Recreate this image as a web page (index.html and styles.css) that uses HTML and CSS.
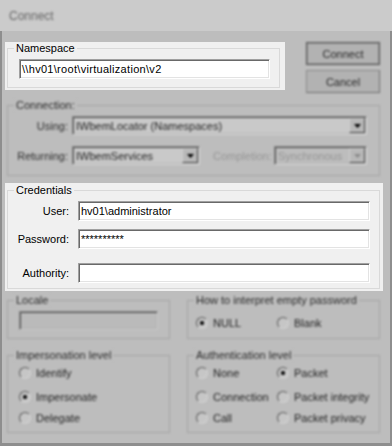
FILE: index.html
```html
<!DOCTYPE html>
<html>
<head>
<meta charset="utf-8">
<link rel="stylesheet" href="styles.css">
</head>
<body>
<div class="titlebar"><span class="title dim">Connect</span></div>
<div class="frame">
  <div class="row-top">
    <div class="focus ns-box">
      <div class="group ns-group">
        <div class="legend">Namespace</div>
        <div class="field ns-field">\\hv01\root\virtualization\v2</div>
      </div>
    </div>
    <div class="buttons dim">
      <button class="btn default">Connect</button>
      <button class="btn">Cancel</button>
    </div>
  </div>

  <div class="group dimgroup dim conn">
    <div class="legend">Connection:</div>
    <div class="conn-row using-row">
      <span class="lbl conn-lbl">Using:</span>
      <div class="combo using-combo"><span>IWbemLocator (Namespaces)</span><span class="drop"><svg width="7" height="4" viewBox="0 0 7 4"><polygon points="0,0 7,0 3.5,4" fill="#000"/></svg></span></div>
    </div>
    <div class="conn-row ret-row">
      <span class="lbl conn-lbl">Returning:</span>
      <div class="combo ret-combo"><span>IWbemServices</span><span class="drop"><svg width="7" height="4" viewBox="0 0 7 4"><polygon points="0,0 7,0 3.5,4" fill="#000"/></svg></span></div>
      <span class="lbl disabled compl-lbl">Completion:</span>
      <div class="combo disabled compl-combo"><span>Synchronous</span><span class="drop"><svg width="7" height="4" viewBox="0 0 7 4"><polygon points="0,0 7,0 3.5,4" fill="#8a8a8a"/></svg></span></div>
    </div>
  </div>

  <div class="focus cred-box">
    <div class="group cred-group">
      <div class="legend">Credentials</div>
      <div class="cred-row user-row">
        <span class="lbl cred-lbl">User:</span>
        <div class="field cred-field">hv01\administrator</div>
      </div>
      <div class="cred-row pass-row">
        <span class="lbl cred-lbl">Password:</span>
        <div class="field cred-field">**********</div>
      </div>
      <div class="cred-row auth-row">
        <span class="lbl cred-lbl">Authority:</span>
        <div class="field cred-field"></div>
      </div>
    </div>
  </div>

  <div class="pair row4">
    <div class="group dimgroup dim locale">
      <div class="legend">Locale</div>
      <div class="field dimfield locale-field"></div>
    </div>
    <div class="group dimgroup dim empty-pw">
      <div class="legend">How to interpret empty password</div>
      <div class="radio-grid pw-grid">
        <label class="opt"><span class="radio on"></span>NULL</label>
        <label class="opt"><span class="radio"></span>Blank</label>
      </div>
    </div>
  </div>

  <div class="pair row5">
    <div class="group dimgroup dim imp">
      <div class="legend">Impersonation level</div>
      <div class="radio-list imp-list">
        <label class="opt r1"><span class="radio"></span>Identify</label>
        <label class="opt r2"><span class="radio on"></span>Impersonate</label>
        <label class="opt r3"><span class="radio"></span>Delegate</label>
      </div>
    </div>
    <div class="group dimgroup dim authlvl">
      <div class="legend">Authentication level</div>
      <div class="radio-grid auth-grid">
        <label class="opt r1"><span class="radio"></span>None</label>
        <label class="opt r1"><span class="radio on"></span>Packet</label>
        <label class="opt r2"><span class="radio"></span>Connection</label>
        <label class="opt r2"><span class="radio"></span>Packet integrity</label>
        <label class="opt r3"><span class="radio"></span>Call</label>
        <label class="opt r3"><span class="radio"></span>Packet privacy</label>
      </div>
    </div>
  </div>
</div>
</body>
</html>
```

FILE: styles.css
```css
* { box-sizing: border-box; }
html, body { margin: 0; padding: 0; }
body {
  width: 392px;
  height: 446px;
  overflow: hidden;
  background: #bdbdbd;
  font-family: "Liberation Sans", Arial, sans-serif;
  font-size: 11px;
  color: #000;
}
.dim { filter: blur(0.8px); }

.titlebar {
  height: 31px;
  background: #cbcbcb;
  display: flex;
  align-items: center;
  padding-left: 9px;
}
.title { font-size: 12px; color: #666; }

.frame {
  height: 415px;
  border: 2px solid #8e8e8e;
  border-top: 0;
  border-bottom-width: 3px;
  display: flex;
  flex-direction: column;
  align-items: flex-start;
}

/* group boxes: border line is the box top, caption sits over it */
.group {
  border: 1px solid #d9d9d9;
}
.group > .legend {
  width: fit-content;
  margin: -7px 0 0 6px;
  padding: 0 2px;
  height: 12px;
  line-height: 12px;
  font-size: 11px;
  background: #f0f0f0;
}
.dimgroup { border-color: #a4a4a4; }
.dimgroup > .legend { color: #2a2a2a; background: #bdbdbd; }

.focus { background: #f0f0f0; }

/* row 1 */
.row-top {
  display: flex;
  align-items: flex-start;
  margin-top: 11px;
}
.ns-box {
  margin-left: 3px;
  width: 280px;
  padding: 6px 5px 2px 2px;
}
.ns-group { height: 40px; }
.ns-field { margin: 5px 0 0 11px; width: 251px; letter-spacing: 0.3px; }

.buttons {
  margin-left: 21px;
  width: 74px;
  display: flex;
  flex-direction: column;
  gap: 5px;
}
.btn {
  appearance: none;
  margin: 0;
  padding: 0;
  height: 23px;
  width: 74px;
  font-family: inherit;
  font-size: 11px;
  color: #262626;
  background: #b2b2b2;
  border: 1px solid #8a8a8a;
  border-right-color: #6e6e6e;
  border-bottom-color: #6e6e6e;
}
.btn.default {
  border: 1px solid #555;
  box-shadow: inset 0 0 0 1px #8c8c8c;
}

/* fields */
.field {
  height: 20px;
  background: #fff;
  border: 1px solid;
  border-color: #a0a0a0 #fff #fff #a0a0a0;
  box-shadow: inset 1px 1px 0 #696969, inset -1px -1px 0 #e3e3e3;
  padding: 0 1px 0 2px;
  display: flex;
  align-items: center;
  white-space: nowrap;
  font-size: 11px;
}
.dimfield {
  background: #bababa;
  border-color: #8a8a8a #c9c9c9 #c9c9c9 #8a8a8a;
  box-shadow: inset 1px 1px 0 #4e4e4e, inset -1px -1px 0 #b3b3b3;
}

.lbl { color: #000; white-space: nowrap; }
.dim .lbl { color: #2c2c2c; }
.dim .lbl.disabled { color: #969696; }

/* connection */
.conn {
  margin: 12px 0 0 5px;
  width: 373px;
  height: 71px;
}
.conn-row {
  display: flex;
  align-items: center;
  padding-right: 12px;
}
.using-row { margin-top: 5px; }
.ret-row { margin-top: 11px; }
.conn-lbl { width: 60px; text-align: right; margin-right: 4px; }
.combo {
  height: 19px;
  display: flex;
  align-items: center;
  background: #c9c9c9;
  border: 1px solid;
  border-color: #8a8a8a #d6d6d6 #d6d6d6 #8a8a8a;
  box-shadow: inset 1px 1px 0 #4e4e4e, inset -1px -1px 0 #b6b6b6;
  padding: 1px 1px 1px 3px;
  color: #1e1e1e;
  white-space: nowrap;
}
.combo.disabled { color: #959595; background: #bdbdbd; }
.drop {
  margin-left: auto;
  width: 16px;
  height: 15px;
  background: #b8b8b8;
  border: 1px solid;
  border-color: #cfcfcf #4a4a4a #4a4a4a #cfcfcf;
  display: flex;
  align-items: center;
  justify-content: center;
}
.using-combo { width: 295px; }
.ret-combo { width: 128px; }
.compl-lbl { margin-left: 13px; }
.compl-combo { width: 93px; margin-left: auto; }

/* credentials */
.cred-box {
  margin: 7px 0 0 3px;
  width: 378px;
  padding: 7px 3px 2px 2px;
}
.cred-group { height: 99px; }
.cred-row { display: flex; align-items: center; }
.cred-lbl { width: 61px; text-align: right; margin-right: 9px; }
.cred-field { width: 292px; }
.user-row { margin-top: 5px; }
.pass-row { margin-top: 8px; }
.auth-row { margin-top: 14px; }

/* lower rows */
.pair {
  display: flex;
  gap: 17px;
  margin-left: 5px;
}
.row4 { margin-top: 9px; }
.row5 { margin-top: 16px; }
.locale, .imp { width: 163px; }
.empty-pw, .authlvl { width: 193px; }
.locale, .empty-pw { height: 39px; }
.imp, .authlvl { height: 78px; }
.locale-field { margin: 5px 0 0 11px; width: 139px; height: 19px; }

.opt {
  display: flex;
  align-items: center;
  gap: 5px;
  height: 16px;
  color: #222;
  white-space: nowrap;
}
.radio {
  flex: none;
  width: 12px;
  height: 12px;
  border-radius: 50%;
  border: 1px solid;
  border-color: #555 #d2d2d2 #d2d2d2 #555;
  background: #c6c6c6;
}
.radio.on {
  background: radial-gradient(circle, #111 0 1.8px, #c6c6c6 2.4px);
}

.pw-grid {
  display: grid;
  grid-template-columns: 81px 1fr;
  padding-left: 8px;
  margin-top: 9px;
}
.imp-list {
  display: flex;
  flex-direction: column;
  padding-left: 11px;
}
.auth-grid {
  display: grid;
  grid-template-columns: 81px 1fr;
  padding-left: 8px;
}
.r1 { margin-top: 4px; }
.r2 { margin-top: 8px; }
.r3 { margin-top: 5px; }
```
